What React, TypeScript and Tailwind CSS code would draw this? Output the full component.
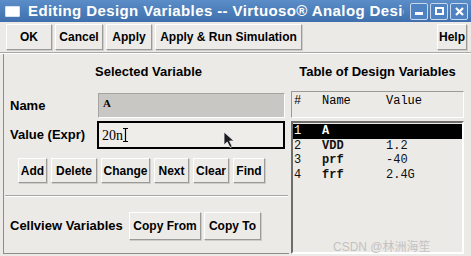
const sans = { fontFamily: '"Liberation Sans", Arial, sans-serif' };
const mono = { fontFamily: '"Liberation Mono", "Courier New", monospace' };

const Btn = ({ label, className = "" }: { label: string; className?: string }) => {
  return (
    <div
      className={
        "flex items-center justify-center whitespace-nowrap border border-t-white border-l-white border-b-[#9c9a96] border-r-[#9c9a96] bg-[#edebe8] font-bold text-[12px] text-black shadow-[1px_1px_0_#cfcdc9] " +
        className
      }
    >
      {label}
    </div>
  );
};

const rows = [
  { n: "1", name: "A", value: "", selected: true },
  { n: "2", name: "VDD", value: "1.2" },
  { n: "3", name: "prf", value: "-40" },
  { n: "4", name: "frf", value: "2.4G" },
];

const App = () => {
  return (
    <div className="w-[471px] h-[256px] overflow-hidden bg-[#eceae7] flex flex-col" style={sans}>
      {/* title bar */}
      <div className="h-[22px] shrink-0 flex items-center bg-gradient-to-b from-[#5b8dc8] to-[#3f70ad] pl-[5px] pr-[3px]">
        <div className="w-[15px] h-[11px] bg-white border border-[#d8e2ee] rounded-[1px] mr-[8px]" />
        <div className="flex-1 overflow-hidden whitespace-nowrap text-white font-bold text-[15px] tracking-[0.4px]">
          Editing Design Variables -- Virtuoso® Analog Design Environment
        </div>
        <div className="flex gap-[2px] ml-[6px]">
          <div className="w-[18px] h-[17px] border border-[#c9d8ec] rounded-[2px] bg-[#4f82c0] flex items-end justify-center pb-[4px]">
            <div className="w-[8px] h-[3px] bg-white" />
          </div>
          <div className="w-[18px] h-[17px] border border-[#c9d8ec] rounded-[2px] bg-[#4f82c0] flex items-center justify-center">
            <div className="w-[9px] h-[8px] border-2 border-white" />
          </div>
          <div className="w-[18px] h-[17px] border border-[#c9d8ec] rounded-[2px] bg-[#4f82c0] flex items-center justify-center">
            <svg width="9" height="9" viewBox="0 0 9 9">
              <path d="M1 1 L8 8 M8 1 L1 8" stroke="#fff" strokeWidth="2.2" />
            </svg>
          </div>
        </div>
      </div>

      {/* toolbar */}
      <div className="h-[31px] shrink-0 flex items-center pl-[6px] pr-[4px] border-b border-[#a9a7a3]">
        <div className="flex gap-[3px]">
          <Btn label="OK" className="w-[46px] h-[26px]" />
          <Btn label="Cancel" className="w-[48px] h-[26px]" />
          <Btn label="Apply" className="w-[46px] h-[26px]" />
          <Btn label="Apply & Run Simulation" className="w-[147px] h-[26px]" />
        </div>
        <div className="flex-1" />
        <Btn label="Help" className="w-[30px] h-[26px]" />
      </div>

      {/* main */}
      <div className="flex flex-1 min-h-0 border-t border-white">
        {/* left */}
        <div className="w-[286px] ml-[3px] mb-[2px] border-l border-b border-[#8f8d89] flex flex-col">
          <div className="text-center font-bold text-[13px] leading-[15px] mt-[10px] pl-[4px]">Selected Variable</div>
          <div className="flex items-center mt-[14px]">
            <div className="w-[94px] pl-[6px] font-bold text-[13px]">Name</div>
            <div
              className="w-[187px] h-[25px] bg-[#c9c7c4] border border-t-[#a7a5a1] border-l-[#a7a5a1] border-b-white border-r-white text-[11px] font-bold pl-[4px] pt-[1px]"
              style={{ fontFamily: '"Liberation Serif", serif' }}
            >
              A
            </div>
          </div>
          <div className="flex items-center mt-[3px]">
            <div className="w-[93px] pl-[6px] font-bold text-[13px]">Value (Expr)</div>
            <div
              className="relative flex items-start w-[188px] h-[28px] bg-[#efedea] border-2 border-black text-[14px] pl-[3px] pt-[2px]"
              style={{ fontFamily: '"Liberation Serif", serif' }}
            >
              20n
              <svg className="mt-[3px]" width="5" height="14" viewBox="0 0 5 14">
                <path d="M0 0.5 H5 M2.5 0.5 V13.5 M0 13.5 H5" stroke="#000" strokeWidth="1.2" fill="none" />
              </svg>
              <svg className="absolute left-[124px] top-[8px]" width="13" height="18" viewBox="0 0 13 18">
                <path d="M1 1 L1 14 L4.2 11 L7 16.5 L9.2 15.5 L6.6 10 L11 10 Z" fill="#1c1c22" stroke="#f4f4f4" strokeWidth="0.8" />
              </svg>
            </div>
          </div>
          <div className="flex gap-[4px] mt-[9px] pl-[14px]">
            <Btn label="Add" className="w-[29px] h-[25px]" />
            <Btn label="Delete" className="w-[46px] h-[25px]" />
            <Btn label="Change" className="w-[49px] h-[25px]" />
            <Btn label="Next" className="w-[35px] h-[25px]" />
            <Btn label="Clear" className="w-[36px] h-[25px]" />
            <Btn label="Find" className="w-[32px] h-[25px]" />
          </div>
          <div className="mt-[12px] mx-[1px] h-[2px] border-t border-[#a9a7a3] border-b border-b-white" />
          <div className="flex items-center mt-[15px]">
            <div className="w-[125px] pl-[6px] font-bold text-[13px]">Cellview Variables</div>
            <div className="flex gap-[3px]">
              <Btn label="Copy From" className="w-[72px] h-[28px]" />
              <Btn label="Copy To" className="w-[57px] h-[28px]" />
            </div>
          </div>
        </div>

        {/* right */}
        <div className="flex-1 flex flex-col pl-[2px] pr-[7px] pb-[2px]">
          <div className="text-center font-bold text-[13px] leading-[15px] mt-[10px]">Table of Design Variables</div>
          <div
            className="mt-[12px] h-[27px] shrink-0 border border-t-[#9c9a96] border-l-[#9c9a96] border-b-white border-r-white flex text-[12px] leading-[14px] pt-[2px]"
            style={mono}
          >
            <div className="w-[30px] pl-[2px]">#</div>
            <div className="w-[64px]">Name</div>
            <div>Value</div>
          </div>
          <div
            className="mt-[3px] flex-1 border-2 border-t-[#6f6d69] border-l-[#6f6d69] border-b-white border-r-white flex flex-col pt-[1px] text-[12px] leading-[14px] relative"
            style={mono}
          >
            {rows.map((r) => (
              <div
                key={r.n}
                className={"flex h-[14.5px] shrink-0 items-center " + (r.selected ? "bg-black text-white" : "text-[#111]")}
              >
                <div className="w-[29px] pl-[1px]">{r.n}</div>
                <div className="w-[64px] font-bold">{r.name}</div>
                <div>{r.value}</div>
              </div>
            ))}
          </div>
        </div>
      </div>
      <div
        className="absolute left-[333px] top-[238px] text-[12px] text-[#c4c2bf] whitespace-nowrap"
        style={{ fontFamily: '"Liberation Sans", "Noto Sans CJK SC", sans-serif' }}
      >
        CSDN @林洲海笙
      </div>
    </div>
  );
};

export default App;
